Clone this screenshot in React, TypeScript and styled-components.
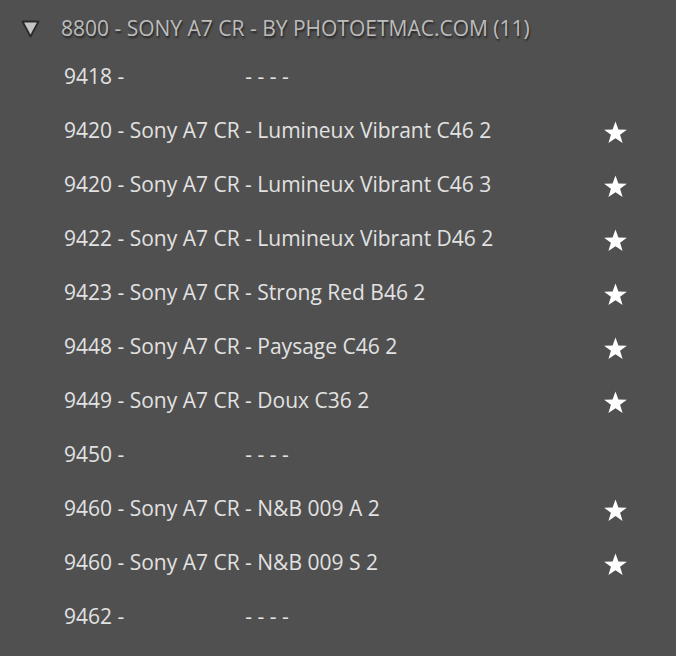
import React from 'react'
import styled, { createGlobalStyle } from 'styled-components'

const GlobalStyle = createGlobalStyle`
    html, body {
        margin: 0;
        padding: 0;
        background: #505050;
    }
`

type Preset = { num: string, name?: string, fav?: boolean }

const presets: Preset[] = [
    { num: '9418' },
    { num: '9420', name: 'Sony A7 CR - Lumineux Vibrant C46 2', fav: true },
    { num: '9420', name: 'Sony A7 CR - Lumineux Vibrant C46 3', fav: true },
    { num: '9422', name: 'Sony A7 CR - Lumineux Vibrant D46 2', fav: true },
    { num: '9423', name: 'Sony A7 CR - Strong Red B46 2', fav: true },
    { num: '9448', name: 'Sony A7 CR - Paysage C46 2', fav: true },
    { num: '9449', name: 'Sony A7 CR - Doux C36 2', fav: true },
    { num: '9450' },
    { num: '9460', name: 'Sony A7 CR - N&B 009 A 2', fav: true },
    { num: '9460', name: 'Sony A7 CR - N&B 009 S 2', fav: true },
    { num: '9462' },
]

const Star = () => (
    <svg width="25" height="25" viewBox="0 0 24 24">
        <polygon
            points="12,1.5 14.8,9.1 22.9,9.3 16.4,14.2 18.8,22 12,17.4 5.2,22 7.6,14.2 1.1,9.3 9.2,9.1"
            fill="#ffffff"
        />
    </svg>
)

const Triangle = () => (
    <svg width="19" height="18" viewBox="0 0 19 18">
        <polygon points="1.5,1.5 17.5,1.5 9.5,16.5" fill="#c4c4c4" stroke="#2a2a2a" strokeWidth="1.8" strokeLinejoin="round" />
    </svg>
)

const App = () => {
    return (
        <>
            <GlobalStyle />
            <Panel>
                <Folder>
                    <Toggle><Triangle /></Toggle>
                    <FolderName>8800 - SONY A7 CR - BY PHOTOETMAC.COM (11)</FolderName>
                </Folder>
                <List>
                    {presets.map((p, i) => (
                        <Row key={i}>
                            {p.name ? (
                                <Label>{p.num} - {p.name}</Label>
                            ) : (
                                <Label>{p.num} -<Blank>- - - -</Blank></Label>
                            )}
                            {p.fav && <Fav><Star /></Fav>}
                        </Row>
                    ))}
                </List>
            </Panel>
        </>
    )
}

export default App

const Panel = styled.div`
    width: 676px;
    height: 656px;
    background: #505050;
    display: flex;
    flex-direction: column;
    font-family: 'Open Sans', 'Liberation Sans', sans-serif;
    overflow: hidden;
`
const Folder = styled.div`
    box-sizing: border-box;
    height: 49px;
    padding: 7px 0 0 21px;
    display: flex;
    align-items: center;
`
const Toggle = styled.div`
    width: 40px;
    display: flex;
    align-items: center;
    margin-top: 1px;
`
const FolderName = styled.div`
    color: #bcbcbc;
    font-size: 21px;
    text-shadow: 1px 2px 2px rgba(0, 0, 0, 0.55);
    white-space: nowrap;
`
const List = styled.div`
    display: flex;
    flex-direction: column;
`
const Row = styled.div`
    height: 54px;
    display: flex;
    align-items: center;
    justify-content: space-between;
    padding: 0 48px 0 64px;
`
const Label = styled.div`
    color: #e2e2e2;
    font-size: 21px;
    white-space: nowrap;
`
const Blank = styled.span`
    margin-left: 121px;
`
const Fav = styled.div`
    display: flex;
    align-items: center;
    margin-top: 4px;
`
